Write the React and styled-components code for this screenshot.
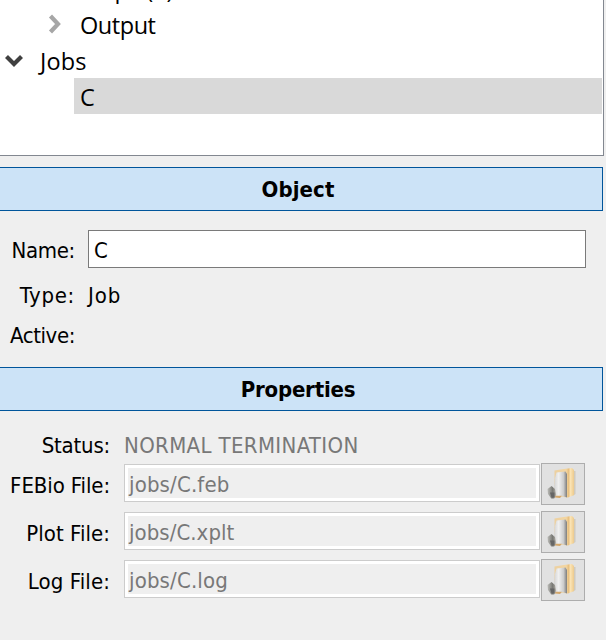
import React from "react";
import styled, { createGlobalStyle } from "styled-components";

const GlobalStyle = createGlobalStyle`
  * { box-sizing: border-box; }
  body { margin: 0; background: #efefef; overflow: hidden; }
`;

const Window = styled.main`
  width: 606px;
  height: 640px;
  overflow: hidden;
  background: #efefef;
  color: #000;
  font: 22px/40px "DejaVu Sans Condensed", "DejaVu Sans", sans-serif;
  font-stretch: condensed;
`;

const Tree = styled.div`
  width: 604px;
  height: 156px;
  overflow: hidden;
  background: #fff;
  border: solid #828790;
  border-width: 0 1px 1px 0;
  padding-right: 1px;
  font: 23.5px/36px "Open Sans", "Noto Sans", sans-serif;
`;

const TreeRow = styled.div`
  display: flex;
  height: 36px;
  padding-left: ${(p) => p.$indent}px;
  margin-top: ${(p) => (p.$clipped ? -30 : 0)}px;
`;

const Expander = styled.svg`
  flex: none;
  width: 34px;
  height: 36px;
  fill: none;
  stroke: ${(p) => (p.$open ? "#404040" : "#a6a6a6")};
  stroke-width: 4.2;
`;

const TreeLabel = styled.div`
  flex: 1;
  padding-left: 6px;
  padding-top: 1px;
  white-space: pre;
  letter-spacing: ${(p) => p.$spacing || 0}px;
  background: ${(p) => (p.$selected ? "#d9d9d9" : "transparent")};
`;

const SectionHeader = styled.h2`
  width: 603px;
  height: 44px;
  margin: ${(p) => p.$top}px 0 0;
  padding-right: 6px;
  background: #cce3f7;
  border: solid #00559b;
  border-width: 1px 1px 1px 0;
  font-size: 22px;
  line-height: 44px;
  font-weight: 700;
  text-align: center;
  letter-spacing: ${(p) => p.$spacing}px;
`;

const Form = styled.div`
  display: grid;
  grid-template-columns: ${(p) => p.$labelWidth}px 1fr;
  grid-template-rows: ${(p) => p.$rows};
  column-gap: ${(p) => p.$gap}px;
  padding: ${(p) => p.$top}px 20px 0 0;
`;

const Label = styled.label`
  text-align: right;
  white-space: nowrap;
  padding-top: ${(p) => p.$drop || 1}px;
  letter-spacing: ${(p) => p.$spacing || 0}px;
`;

const Value = styled.div`
  white-space: nowrap;
  padding-top: 1px;
  color: ${(p) => (p.$muted ? "#787878" : "#000")};
  letter-spacing: ${(p) => p.$spacing || 0}px;
`;

const NameField = styled.div`
  width: 498px;
  height: 38px;
  padding-left: 5px;
  background: #fff;
  border: 1px solid #7a7a7a;
  line-height: 39px;
`;

const FileRow = styled.div`
  display: flex;
  gap: 1px;
  height: 42px;
`;

const PathField = styled.div`
  width: 416px;
  height: 38px;
  margin-top: 1px;
  border: 1px solid #cccccc;
  background: #fff;
  padding: 3px;
`;

const PathText = styled.div`
  height: 30px;
  padding-left: 1px;
  background: #efefef;
  color: #787878;
  line-height: 34px;
  letter-spacing: ${(p) => p.$spacing || 0}px;
`;

const BrowseButton = styled.button`
  width: 44px;
  height: 42px;
  padding: 0;
  border: 1px solid #adadad;
  background: #e1e1e1;
  svg { display: block; filter: blur(0.7px); }
`;

function FolderIcon() {
  return (
    <svg width="42" height="40" viewBox="0 0 42 40">
      <defs>
        <linearGradient id="flap" x1="0" x2="1">
          <stop offset="0" stopColor="#ecd0a0" />
          <stop offset=".6" stopColor="#f3d6a2" />
          <stop offset=".72" stopColor="#e8c080" />
          <stop offset=".82" stopColor="#fae3b4" />
          <stop offset="1" stopColor="#edca8c" />
        </linearGradient>
        <linearGradient id="paper" x1="0" x2="1">
          <stop offset="0" stopColor="#cccccc" />
          <stop offset=".4" stopColor="#f0f0f0" />
          <stop offset=".75" stopColor="#cccccc" />
          <stop offset="1" stopColor="#7c7c7c" />
        </linearGradient>
        <linearGradient id="roll" x1="0" x2="1">
          <stop offset="0" stopColor="#bcbcb8" />
          <stop offset=".6" stopColor="#777773" />
          <stop offset="1" stopColor="#b8b5ad" />
        </linearGradient>
      </defs>
      <path d="M31 7h2.500v23l-3 2z" fill="#d0cabd" />
      <path d="M12.500 6.500Q22 4.500 30 4l2 2v25l-6 2.500-13.500-1.500z" fill="url(#flap)" />
      <path d="M13 14L14.500 8.500l9-1 1.500 2.500v23.500l-4-1.200L11 33z" fill="url(#paper)" />
      <path d="M13 31.800h7l-2 2.200-5-.5z" fill="#d3a76b" />
      <path d="M5.500 25l4-3 3.500 3 1.200 6-2 3.500h-3L6 30z" fill="url(#roll)" />
      <path d="M8 28.500h4.500v5h-3z" fill="#656565" />
    </svg>
  );
}

const files = [
  { label: "FEBio File:", path: "jobs/C.feb", labelSpacing: -0.1, pathSpacing: 0.15 },
  { label: "Plot File:", path: "jobs/C.xplt", labelSpacing: 0.05, pathSpacing: 0.05 },
  { label: "Log File:", path: "jobs/C.log", labelSpacing: 0.1, pathSpacing: 0.15 },
];

export default function App() {
  return (
    <Window>
      <GlobalStyle />
      <Tree>
        <TreeRow $indent={74} $clipped><TreeLabel>Steps (1)</TreeLabel></TreeRow>
        <TreeRow $indent={40}>
          <Expander><path d="M10.500 10l7.500 8-7.500 8" /></Expander>
          <TreeLabel $spacing={-0.45}>Output</TreeLabel>
        </TreeRow>
        <TreeRow $indent={0}>
          <Expander $open><path d="M6.500 14.500l7.500 7.500 7.500-7.500" /></Expander>
          <TreeLabel $spacing={0.15}>Jobs</TreeLabel>
        </TreeRow>
        <TreeRow $indent={74}><TreeLabel $selected>C</TreeLabel></TreeRow>
      </Tree>

      <SectionHeader $top={11} $spacing={0.1}>Object</SectionHeader>
      <Form $labelWidth={75} $gap={13} $top={19} $rows="45px 40px 40px">
        <Label $spacing={-0.3}>Name:</Label>
        <NameField>C</NameField>
        <Label $spacing={0.7}>Type:</Label>
        <Value $spacing={0.9}>Job</Value>
        <Label $spacing={-0.4}>Active:</Label>
      </Form>

      <SectionHeader $top={12} $spacing={-0.2}>Properties</SectionHeader>
      <Form $labelWidth={110} $gap={14} $top={14} $rows="38px 48px 48px 48px">
        <Label $spacing={-0.2}>Status:</Label>
        <Value $muted $spacing={0.35}>NORMAL TERMINATION</Value>
        {files.map((f) => (
          <React.Fragment key={f.label}>
            <Label $drop={3} $spacing={f.labelSpacing}>{f.label}</Label>
            <FileRow>
              <PathField><PathText $spacing={f.pathSpacing}>{f.path}</PathText></PathField>
              <BrowseButton aria-label="Browse"><FolderIcon /></BrowseButton>
            </FileRow>
          </React.Fragment>
        ))}
      </Form>
    </Window>
  );
}
